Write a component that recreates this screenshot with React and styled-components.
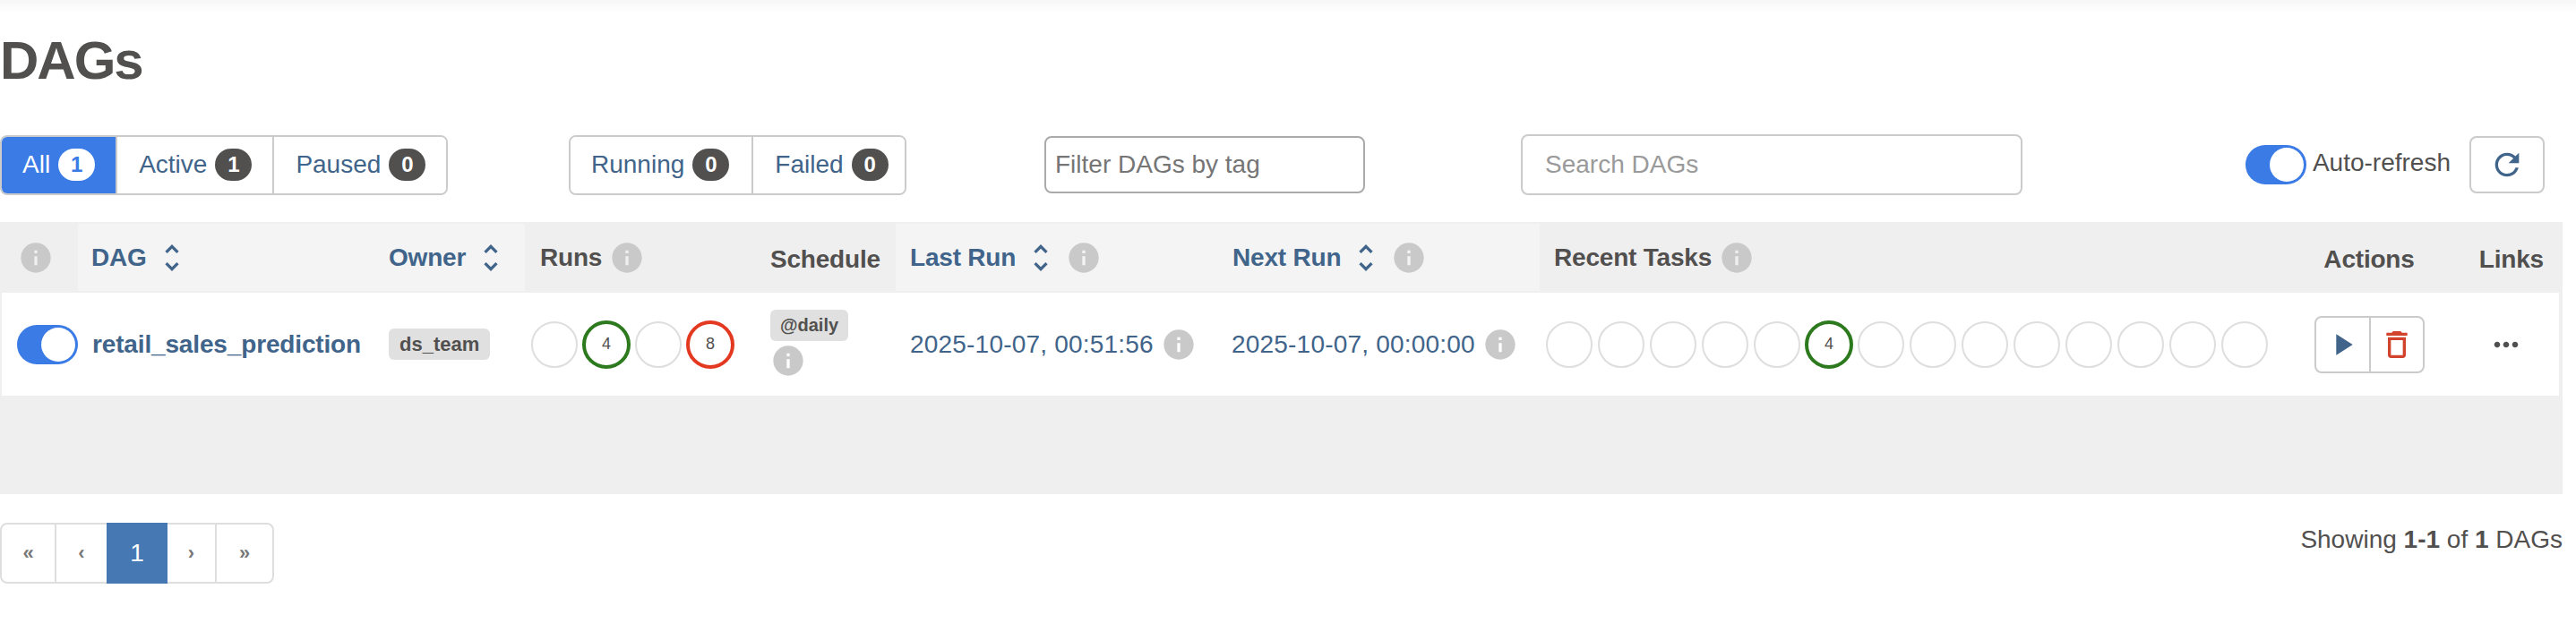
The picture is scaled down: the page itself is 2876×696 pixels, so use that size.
import React from 'react';
import styled, { createGlobalStyle } from 'styled-components';
import { MdInfo, MdUnfoldMore, MdRefresh, MdPlayArrow, MdDeleteOutline, MdMoreHoriz } from 'react-icons/md';

const GlobalStyle = createGlobalStyle`
  * { box-sizing: border-box; }
  html, body { margin: 0; background: #fff; }
  body {
    font-family: "Liberation Sans", Arial, sans-serif;
    font-size: 28px;
    color: #51504f;
  }
`;

const TopShade = styled.div`
  height: 14px;
  background: linear-gradient(#f6f6f6, #ffffff);
`;

const Page = styled.main`
  padding-right: 15px;
`;

const Title = styled.h2`
  margin: 0;
  height: 136px;
  padding-top: 16px;
  font-size: 60px;
  line-height: 76px;
  font-weight: 700;
  letter-spacing: -2px;
  color: #51504f;
`;

const Toolbar = styled.div`
  display: flex;
  align-items: center;
  height: 68px;
  margin-bottom: 30px;
`;

const BtnGroup = styled.div`
  display: flex;
  flex: none;
  width: ${p => p.$w}px;
  height: 67px;
  margin-left: ${p => p.$offset || 0}px;
  border: 2px solid #cbcbcb;
  border-radius: 8px;
  overflow: hidden;
`;

const FilterBtn = styled.div`
  display: flex;
  flex: ${p => p.$fixed ? 'none' : 'auto'};
  align-items: center;
  gap: 9px;
  padding: 0 ${p => p.$fixed ? 25 : 23}px 0 ${p => p.$left || 24}px;
  margin: ${p => p.$active ? '-2px 0 -2px -2px' : 0};
  color: ${p => p.$active ? '#fff' : '#40648a'};
  background: ${p => p.$active ? '#3a7be6' : '#fff'};
  & + & { border-left: 2px solid #cbcbcb; }
`;

const Count = styled.span`
  min-width: 41px;
  height: 36px;
  border-radius: 18px;
  text-align: center;
  font-size: 24px;
  font-weight: 700;
  line-height: 36px;
  color: ${p => p.$active ? '#3a7be6' : '#fff'};
  background: ${p => p.$active ? '#fff' : '#51504f'};
`;

const TagFilter = styled.div`
  display: flex;
  align-items: center;
  width: 358px;
  height: 64px;
  margin-left: 154px;
  padding-left: 10px;
  border: 2px solid #aaa;
  border-radius: 8px;
  color: #757575;
`;

const SearchBox = styled.div`
  display: flex;
  align-items: center;
  width: 560px;
  height: 68px;
  margin-left: 174px;
  padding-left: 25px;
  border: 2px solid #cbcbcb;
  border-radius: 8px;
  color: #9a9a9a;
`;

const RightTools = styled.div`
  display: flex;
  align-items: center;
  margin-left: auto;
  margin-right: 20px;
`;

const Switch = styled.span`
  display: flex;
  align-items: center;
  justify-content: flex-end;
  flex: none;
  width: 68px;
  height: 44px;
  padding-right: 3px;
  border-radius: 22px;
  background: #3a7be6;

  &::after {
    content: '';
    width: 38px;
    height: 38px;
    border-radius: 50%;
    background: #fff;
  }
`;

const AutoLabel = styled.span`
  margin: -4px 0 0 7px;
`;

const RefreshBtn = styled.div`
  display: flex;
  align-items: center;
  justify-content: center;
  width: 84px;
  height: 64px;
  margin-left: 21px;
  border: 2px solid #cbcbcb;
  border-radius: 8px;
  color: #40648a;
`;

const TableWrap = styled.div`
  height: 304px;
  background: #efefef;
  border-radius: 4px 4px 0 0;
`;

const Table = styled.table`
  width: 100%;
  table-layout: fixed;
  border-collapse: separate;
  border-spacing: 0;
`;

const Th = styled.th`
  width: ${p => p.$w}px;
  height: 79px;
  padding: 0 ${p => p.$right || 0}px 0 ${p => p.$pad || 0}px;
  border-top: 2px solid #efefef;
  border-bottom: 2px solid #efefef;
  background: ${p => p.$sortable ? '#f4f4f4' : '#efefef'};
  color: ${p => p.$sortable ? '#40648a' : '#51504f'};
  font-size: 28px;
  font-weight: 700;
  letter-spacing: -0.2px;
  text-align: ${p => p.$align || 'left'};
  vertical-align: middle;
`;

const ThInner = styled.span`
  display: flex;
  align-items: center;
  gap: 8px;
  white-space: nowrap;
`;

const PlainHead = styled.span`
  display: block;
  padding-top: 5px;
  white-space: nowrap;
`;

const Td = styled.td`
  height: 115px;
  padding: 0 ${p => p.$right || 0}px 0 ${p => p.$pad || 0}px;
  background: #fff;
  vertical-align: middle;
  text-align: ${p => p.$align || 'left'};

  &:first-child { border-left: 2px solid #efefef; }
  &:last-child { border-right: 4px solid #efefef; }
`;

const DagLink = styled.span`
  font-weight: 700;
  letter-spacing: -0.15px;
  color: #40648a;
  white-space: nowrap;
`;

const Chip = styled.span`
  display: inline-block;
  height: 35px;
  padding: 0 ${p => p.$small ? 11 : 12}px;
  border-radius: 6px;
  background: #e0e0e0;
  color: #51504f;
  font-size: ${p => p.$small ? 20 : 22}px;
  font-weight: 700;
  line-height: 35px;
  white-space: nowrap;
`;

const ScheduleCell = styled.div`
  display: flex;
  flex-direction: column;
  align-items: flex-start;
  gap: 2px;
`;

const Circles = styled.div`
  display: flex;
  align-items: center;
  gap: 6px;
`;

const Circle = styled.span`
  display: flex;
  align-items: center;
  justify-content: center;
  flex: none;
  width: ${p => p.$color ? 54 : 52}px;
  height: ${p => p.$color ? 54 : 52}px;
  margin: ${p => p.$color ? '0 -1px' : 0};
  border-radius: 50%;
  border: ${p => p.$color ? `4px solid ${p.$color}` : '2px solid #dedede'};
  font-size: 18px;
  color: #51504f;
`;

const DateCell = styled.div`
  display: flex;
  align-items: center;
  gap: 8px;
  letter-spacing: 0.2px;
  color: #40648a;
  white-space: nowrap;
`;

const ActionGroup = styled.div`
  display: inline-flex;
  height: 64px;
  border: 2px solid #cbcbcb;
  border-radius: 8px;
  vertical-align: middle;
`;

const ActionBtn = styled.span`
  display: flex;
  align-items: center;
  justify-content: center;
  width: ${p => p.$w}px;
  color: ${p => p.$color};
  & + & { border-left: 2px solid #cbcbcb; }
`;

const Footer = styled.div`
  display: flex;
  justify-content: space-between;
  align-items: flex-start;
  margin-top: 32px;
`;

const Pager = styled.nav`
  display: flex;
  height: 68px;
  border: 2px solid #dedede;
  border-radius: 8px;
`;

const PageItem = styled.span`
  display: flex;
  align-items: center;
  justify-content: center;
  width: ${p => p.$w}px;
  margin: ${p => p.$active ? '-2px 0' : 0};
  font-size: ${p => p.$active ? 28 : 22}px;
  font-weight: ${p => p.$active ? 400 : 700};
  color: ${p => p.$active ? '#fff' : '#777'};
  background: ${p => p.$active ? '#4679b3' : 'transparent'};
  border-right: ${p => p.$divider ? '2px solid #dedede' : 0};
`;

const Showing = styled.div`
  margin-top: 3px;
  line-height: 32px;
  white-space: nowrap;

  b { font-weight: 700; }
`;

const InfoIcon = () => <MdInfo size={40} color="#c9c9c9" />;
const SortIcon = () => <MdUnfoldMore size={40} color="#40648a" />;

const App = () => {
  const taskRing = i => (i === 5 ? '#2c7a1d' : undefined);

  return (
    <>
      <GlobalStyle />
      <TopShade />
      <Page>
        <Title>DAGs</Title>

        <Toolbar>
          <BtnGroup $w={500}>
            <FilterBtn $active $left={25}>All <Count $active>1</Count></FilterBtn>
            <FilterBtn>Active <Count>1</Count></FilterBtn>
            <FilterBtn>Paused <Count>0</Count></FilterBtn>
          </BtnGroup>
          <BtnGroup $w={377} $offset={135}>
            <FilterBtn $fixed $left={23}>Running <Count>0</Count></FilterBtn>
            <FilterBtn>Failed <Count>0</Count></FilterBtn>
          </BtnGroup>
          <TagFilter>Filter DAGs by tag</TagFilter>
          <SearchBox>Search DAGs</SearchBox>
          <RightTools>
            <Switch />
            <AutoLabel>Auto-refresh</AutoLabel>
            <RefreshBtn><MdRefresh size={40} /></RefreshBtn>
          </RightTools>
        </Toolbar>

        <TableWrap>
          <Table>
            <thead>
              <tr>
                <Th $w={87} $pad={20}><ThInner><InfoIcon /></ThInner></Th>
                <Th $w={323} $pad={15} $sortable><ThInner>DAG <SortIcon /></ThInner></Th>
                <Th $w={176} $pad={24} $sortable><ThInner>Owner <SortIcon /></ThInner></Th>
                <Th $w={259} $pad={17}><ThInner>Runs <InfoIcon /></ThInner></Th>
                <Th $w={155} $pad={15}><PlainHead>Schedule</PlainHead></Th>
                <Th $w={360} $pad={16} $sortable><ThInner>Last Run <SortIcon /> <InfoIcon /></ThInner></Th>
                <Th $w={359} $pad={16} $sortable><ThInner>Next Run <SortIcon /> <InfoIcon /></ThInner></Th>
                <Th $w={856} $pad={16}><ThInner>Recent Tasks <InfoIcon /></ThInner></Th>
                <Th $w={140} $align="center"><PlainHead>Actions</PlainHead></Th>
                <Th $right={21} $align="right"><PlainHead>Links</PlainHead></Th>
              </tr>
            </thead>
            <tbody>
              <tr>
                <Td $pad={17}><Switch /></Td>
                <Td $pad={16}><DagLink>retail_sales_prediction</DagLink></Td>
                <Td $pad={24}><Chip>ds_team</Chip></Td>
                <Td $pad={7}>
                  <Circles>
                    <Circle />
                    <Circle $color="#2c7a1d">4</Circle>
                    <Circle />
                    <Circle $color="#e43921">8</Circle>
                  </Circles>
                </Td>
                <Td $pad={15}>
                  <ScheduleCell>
                    <Chip $small>@daily</Chip>
                    <InfoIcon />
                  </ScheduleCell>
                </Td>
                <Td $pad={16}><DateCell>2025-10-07, 00:51:56 <InfoIcon /></DateCell></Td>
                <Td $pad={15}><DateCell>2025-10-07, 00:00:00 <InfoIcon /></DateCell></Td>
                <Td $pad={7}>
                  <Circles>
                    {Array.from({ length: 14 }, (_, i) => (
                      <Circle key={i} $color={taskRing(i)}>{i === 5 ? 4 : null}</Circle>
                    ))}
                  </Circles>
                </Td>
                <Td $align="center">
                  <ActionGroup>
                    <ActionBtn $w={59} $color="#40648a"><MdPlayArrow size={40} /></ActionBtn>
                    <ActionBtn $w={60} $color="#d1432c"><MdDeleteOutline size={40} /></ActionBtn>
                  </ActionGroup>
                </Td>
                <Td $right={39} $align="right"><MdMoreHoriz size={40} style={{ verticalAlign: 'middle' }} /></Td>
              </tr>
            </tbody>
          </Table>
        </TableWrap>

        <Footer>
          <Pager>
            <PageItem $w={61} $divider>«</PageItem>
            <PageItem $w={56}>‹</PageItem>
            <PageItem $w={68} $active>1</PageItem>
            <PageItem $w={55} $divider>›</PageItem>
            <PageItem $w={62}>»</PageItem>
          </Pager>
          <Showing>Showing <b>1-1</b> of <b>1</b> DAGs</Showing>
        </Footer>
      </Page>
    </>
  );
};

export default App;
